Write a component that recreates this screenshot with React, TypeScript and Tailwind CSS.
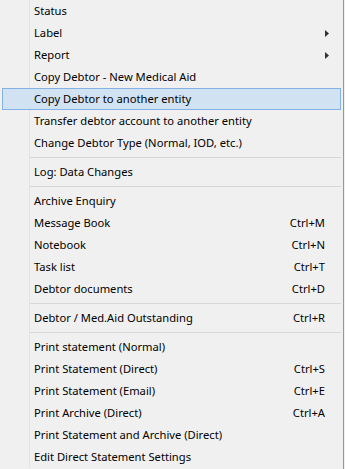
type Item =
  | { kind: "item"; label: string; shortcut?: string; submenu?: boolean; active?: boolean }
  | { kind: "sep" };

const items: Item[] = [
  { kind: "item", label: "Status" },
  { kind: "item", label: "Label", submenu: true },
  { kind: "item", label: "Report", submenu: true },
  { kind: "item", label: "Copy Debtor - New Medical Aid" },
  { kind: "item", label: "Copy Debtor to another entity", active: true },
  { kind: "item", label: "Transfer debtor account to another entity" },
  { kind: "item", label: "Change Debtor Type (Normal, IOD, etc.)" },
  { kind: "sep" },
  { kind: "item", label: "Log: Data Changes" },
  { kind: "sep" },
  { kind: "item", label: "Archive Enquiry" },
  { kind: "item", label: "Message Book", shortcut: "Ctrl+M" },
  { kind: "item", label: "Notebook", shortcut: "Ctrl+N" },
  { kind: "item", label: "Task list", shortcut: "Ctrl+T" },
  { kind: "item", label: "Debtor documents", shortcut: "Ctrl+D" },
  { kind: "sep" },
  { kind: "item", label: "Debtor / Med.Aid Outstanding", shortcut: "Ctrl+R" },
  { kind: "sep" },
  { kind: "item", label: "Print statement (Normal)" },
  { kind: "item", label: "Print Statement (Direct)", shortcut: "Ctrl+S" },
  { kind: "item", label: "Print Statement (Email)", shortcut: "Ctrl+E" },
  { kind: "item", label: "Print Archive (Direct)", shortcut: "Ctrl+A" },
  { kind: "item", label: "Print Statement and Archive (Direct)" },
  { kind: "item", label: "Edit Direct Statement Settings" },
];

function Arrow() {
  return (
    <svg width="4" height="7" viewBox="0 0 4 7" className="mr-[12px]">
      <path d="M0 0 L4 3.5 L0 7 Z" fill="#333" />
    </svg>
  );
}

function Gutter() {
  return <div className="w-[30px] self-stretch shrink-0 border-r border-[#e2e3e3]" />;
}

export default function App() {
  return (
    <div
      className="w-[345px] h-[469px] overflow-hidden bg-[#f0f0f0] text-[11.2px] text-black"
      style={{ fontFamily: '"Noto Sans", "Segoe UI", sans-serif' }}
    >
      <div className="w-[344px] h-full border-r border-[#979797] flex flex-col">
        {items.map((it, i) => {
          if (it.kind === "sep") {
            return (
              <div key={i} className="h-[7px] flex shrink-0 mr-[2px]">
                <Gutter />
                <div className="flex-1 pt-[3px]">
                  <div className="h-px bg-[#d7d7d7]" />
                </div>
              </div>
            );
          }
          if (it.active) {
            return (
              <div
                key={i}
                className="h-[22px] shrink-0 mx-[2px] border border-[#84b2e5] bg-[#d1e2f2] flex items-center pl-[31px]"
              >
                <span className="flex-1 leading-none">{it.label}</span>
              </div>
            );
          }
          return (
            <div key={i} className="h-[22px] shrink-0 flex items-center mr-[2px]">
              <Gutter />
              <span className="flex-1 pl-[4px] leading-none whitespace-nowrap">{it.label}</span>
              {it.shortcut && <span className="pr-[16px] leading-none">{it.shortcut}</span>}
              {it.submenu && <Arrow />}
            </div>
          );
        })}
      </div>
    </div>
  );
}
